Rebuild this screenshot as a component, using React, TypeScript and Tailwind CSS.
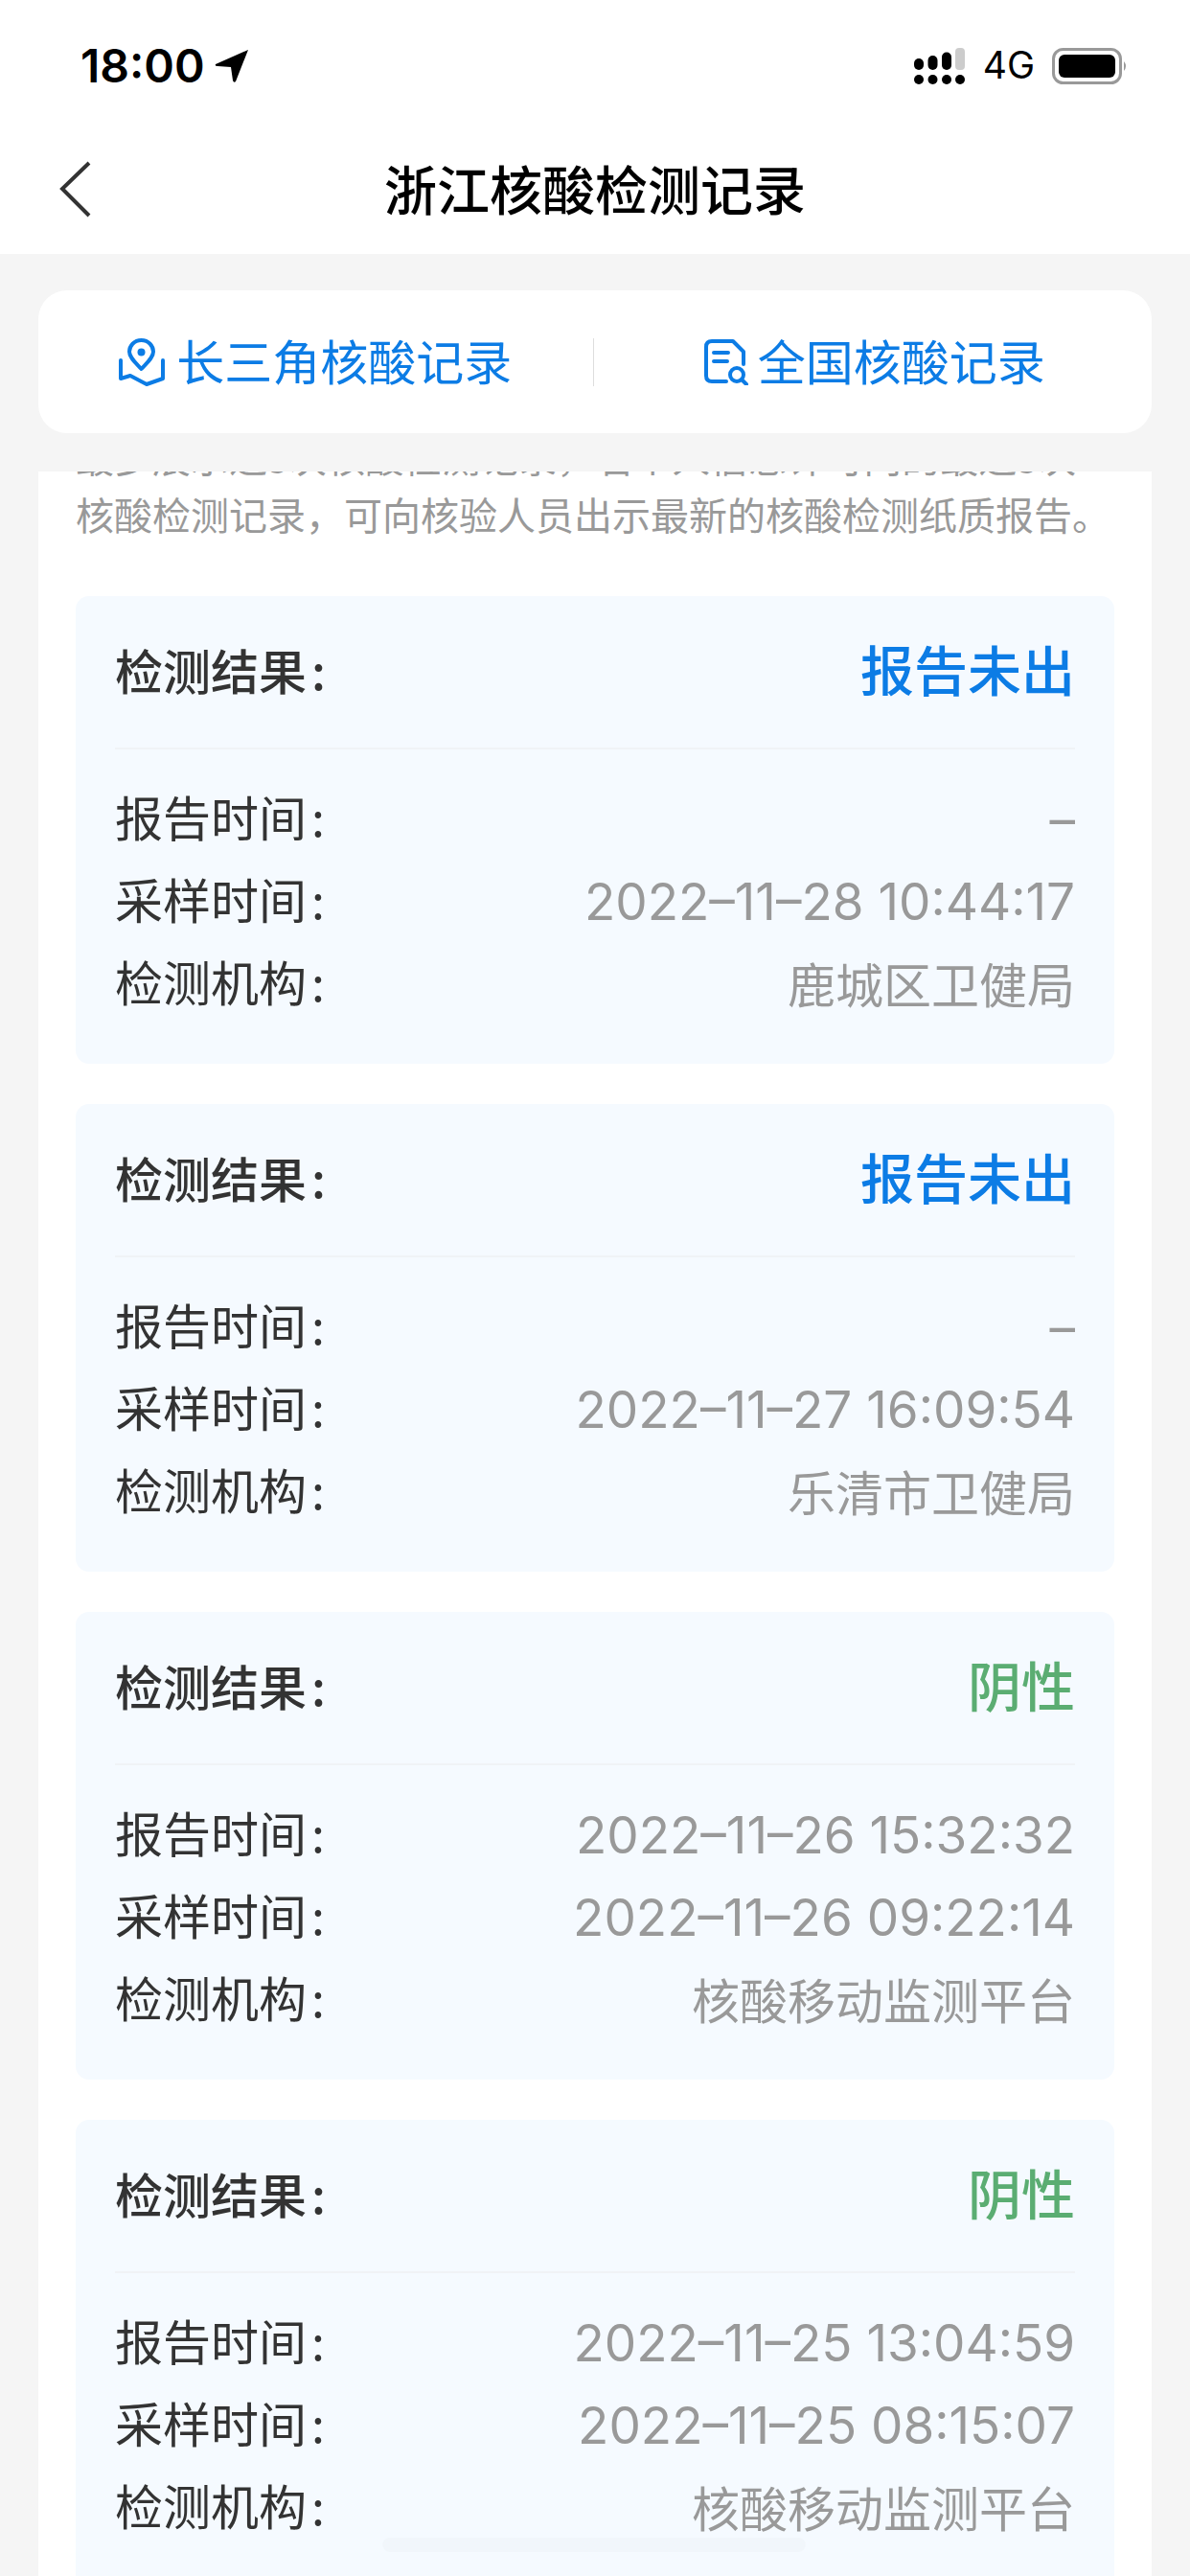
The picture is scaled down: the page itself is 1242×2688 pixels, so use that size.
const font = { fontFamily: '"Noto Sans CJK SC", sans-serif' };

type Rec = { result: string; green?: boolean; report: string; sample: string; org: string };

const records: Rec[] = [
  { result: "报告未出", report: "–", sample: "2022-11-28 10:44:17", org: "鹿城区卫健局" },
  { result: "报告未出", report: "–", sample: "2022-11-27 16:09:54", org: "乐清市卫健局" },
  { result: "阴性", green: true, report: "2022-11-26 15:32:32", sample: "2022-11-26 09:22:14", org: "核酸移动监测平台" },
  { result: "阴性", green: true, report: "2022-11-25 13:04:59", sample: "2022-11-25 08:15:07", org: "核酸移动监测平台" },
];

function Label({ text, medium }: { text: string; medium?: boolean }) {
  return (
    <span className={medium ? "pb-[6px] text-[50px] font-medium text-[#333333]" : "pb-[5px] text-[50px] text-[#333333]"}>
      {text}
      <span className="ml-[5px]">:</span>
    </span>
  );
}

function Row({ label, value, cjk }: { label: string; value: string; cjk?: boolean }) {
  return (
    <div className="flex h-[86px] items-center justify-between">
      <Label text={label} />
      {cjk ? (
        <span className="pb-[2px] text-[50px] text-[#999999]">{value}</span>
      ) : (
        <span className="pt-[3px] font-['Inter',sans-serif] text-[53px] text-[#999999]">{value.replace(/-/g, "–")}</span>
      )}
    </div>
  );
}

function Card({ r }: { r: Rec }) {
  return (
    <div className="mb-[42px] h-[488px] shrink-0 rounded-[14px] bg-[#f5faff] px-[41px]">
      <div className="flex h-[160px] items-center justify-between border-b-2 border-[#f0f3f6]">
        <Label text="检测结果" medium />
        <span className={r.green ? "pb-[8px] text-[56px] font-medium text-[#5bad72]" : "pb-[8px] text-[56px] font-medium text-[#0c7ce5]"}>{r.result}</span>
      </div>
      <div className="pt-[29px]">
        <Row label="报告时间" value={r.report} />
        <Row label="采样时间" value={r.sample} />
        <Row label="检测机构" value={r.org} cjk />
      </div>
    </div>
  );
}

export default function App() {
  return (
    <div className="relative flex h-[2688px] w-[1242px] flex-col overflow-hidden bg-[#f5f5f5]" style={font}>
      <header className="h-[265px] shrink-0 bg-white">
        <div className="flex h-[135px] items-center justify-between pl-[84px] pr-[64px] pt-[2px]">
          <div className="flex items-center gap-[10px]">
            <span className="font-['Inter',sans-serif] text-[48px] font-semibold text-black">18:00</span>
            <svg width="36" height="36" viewBox="0 0 36 36">
              <path d="M35 1 L1 16 Q0 18 3 18 L17 19 L19 33 Q20 36 22 34 Z" fill="#000" />
            </svg>
          </div>
          <div className="flex items-center">
            <svg width="53" height="38" viewBox="0 0 53 38">
              <rect x="0" y="11" width="10" height="12" rx="5" fill="#000" />
              <rect x="14.5" y="8" width="10" height="15" rx="5" fill="#000" />
              <rect x="29" y="4.5" width="10" height="18.5" rx="5" fill="#000" />
              <rect x="43" y="0" width="10" height="23" rx="4" fill="#cccccc" />
              <circle cx="5" cy="33" r="5" fill="#000" />
              <circle cx="19.5" cy="33" r="5" fill="#000" />
              <circle cx="34" cy="33" r="5" fill="#000" />
              <circle cx="48" cy="33" r="5" fill="#000" />
            </svg>
            <span className="ml-[19px] mr-[18px] font-['Inter',sans-serif] text-[39px] text-black">4G</span>
            <svg width="80" height="38" viewBox="0 0 80 38">
              <rect x="1.5" y="1.5" width="70" height="35" rx="10" fill="none" stroke="#999999" strokeWidth="3" />
              <rect x="7" y="7" width="59" height="24" rx="6" fill="#000" />
              <path d="M75 14 Q79 19 75 24 Z" fill="#999999" />
            </svg>
          </div>
        </div>
        <div className="relative flex h-[120px] items-center justify-center">
          <svg className="absolute left-[60px] top-[33px]" width="36" height="60" viewBox="0 0 36 60">
            <path d="M33 2 L5 29 L33 57" fill="none" stroke="#333333" strokeWidth="4" />
          </svg>
          <h1 className="text-[55px] font-medium text-black">浙江核酸检测记录</h1>
        </div>
      </header>

      <div className="mx-[40px] mt-[38px] flex h-[149px] shrink-0 items-center rounded-[30px] bg-white">
        <div className="flex flex-1 items-center justify-center gap-[12px] text-[#0c7ce5]">
          <svg width="48" height="52" viewBox="0 0 48 52" fill="none" stroke="#0c7ce5" strokeWidth="4" strokeLinejoin="round" strokeLinecap="round">
            <path d="M23.5 3 C31 3 36 9 36 15 C36 21 30 26 23.5 33 C17 26 11 21 11 15 C11 9 16 3 23.5 3 Z" />
            <circle cx="23.5" cy="15.5" r="4" fill="#0c7ce5" stroke="none" />
            <path d="M2 24 V43 L12 40 L29 49 L46 43 V24" />
          </svg>
          <span className="pb-[4px] text-[50px]">长三角核酸记录</span>
        </div>
        <div className="h-[50px] w-[1px] bg-[#dddddd]" />
        <div className="flex flex-1 items-center justify-center gap-[10px] pl-[4px] text-[#0c7ce5]">
          <svg width="46" height="48" viewBox="0 0 46 48" fill="none" stroke="#0c7ce5" strokeWidth="4" strokeLinecap="round" strokeLinejoin="round">
            <path d="M23 44 H8 Q2 44 2 38 V8 Q2 2 8 2 H30 L41 13 V26" />
            <path d="M10 14 H25 M10 23 H24" />
            <circle cx="34" cy="37" r="7" />
            <path d="M39 42 L44 47" />
          </svg>
          <span className="pb-[4px] text-[50px]">全国核酸记录</span>
        </div>
      </div>

      <main className="mx-[40px] mt-[40px] flex flex-1 flex-col overflow-hidden bg-white px-[39px]">
        <div className="-mt-[46px] mb-[56px] shrink-0 whitespace-nowrap text-[40px] leading-[60px] text-[#999999]">
          <p>最多展示近5次核酸检测记录，若个人信息许可内的最近5次</p>
          <p>核酸检测记录，可向核验人员出示最新的核酸检测纸质报告。</p>
        </div>
        {records.map((r, i) => (
          <Card key={i} r={r} />
        ))}
      </main>
      <div className="absolute bottom-[25px] left-[399px] h-[15px] w-[442px] rounded-full bg-black/[0.015]" />
    </div>
  );
}
